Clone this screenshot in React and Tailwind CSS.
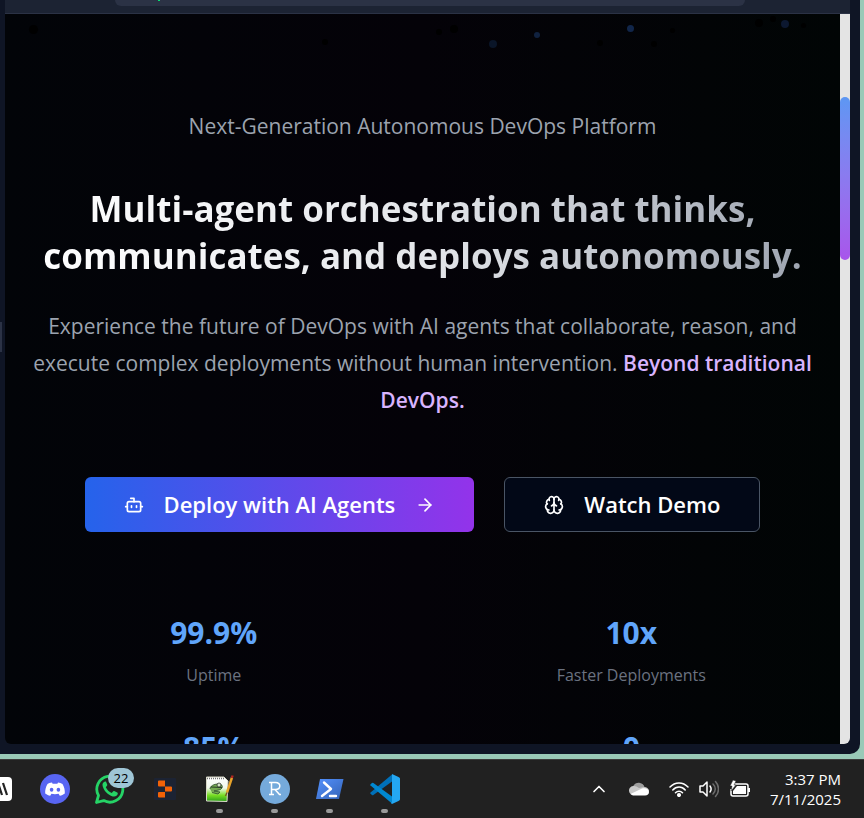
import React from "react";
import { Bot, ArrowRight, Brain, ChevronUp } from "lucide-react";

const particles = [
  ["left-[484px] top-[26px] size-2", "bg-[#0a1528]"],
  ["left-[529px] top-[18px] size-[6px]", "bg-[#10213f]"],
  ["left-[622px] top-[11px] size-[7px]", "bg-[#11264a]"],
  ["left-[776px] top-[6px] size-2", "bg-[#0c1830]"],
  ["left-[24px] top-[11px] size-[9px]", "bg-black"],
  ["left-[317px] top-[25px] size-[6px]", "bg-black"],
  ["left-[431px] top-[15px] size-[6px]", "bg-black"],
  ["left-[445px] top-[11px] size-[8px]", "bg-black"],
  ["left-[592px] top-[26px] size-[6px]", "bg-black"],
  ["left-[646px] top-[27px] size-[6px]", "bg-black"],
  ["left-[665px] top-[14px] size-[5px]", "bg-black"],
  ["left-[750px] top-[5px] size-[8px]", "bg-black"],
  ["left-[765px] top-[2px] size-[6px]", "bg-black"],
  ["left-[796px] top-[9px] size-[5px]", "bg-black"],
];

const stats = [
  { value: "99.9%", label: "Uptime" },
  { value: "10x", label: "Faster Deployments" },
  { value: "85%" },
  { value: "0" },
];

function Hero() {
  return (
    <main className="relative min-w-0 flex-1 overflow-hidden rounded-bl-md bg-linear-to-r from-[#020408] via-[#040208] to-[#010505] px-6 pt-[94px] text-center">
      {particles.map(([place, color]) => (
        <span key={place} className={`absolute rounded-full ${place} ${color}`} />
      ))}
      <p className="text-[21px] leading-9 text-[#9ca3af]">
        Next-Generation Autonomous DevOps Platform
      </p>
      <h1 className="mt-[41px] bg-linear-to-r/srgb from-white via-[#e5e7eb] to-[#9ca3af] bg-clip-text text-[35px] leading-[47px] font-bold whitespace-nowrap text-transparent">
        Multi-agent orchestration that thinks,
        <br />
        communicates, and deploys autonomously.
      </h1>
      <p className="mt-[29px] text-[21px] leading-[37px] whitespace-nowrap text-[#9ca3af]">
        Experience the future of DevOps with AI agents that collaborate, reason, and
        <br />
        execute complex deployments without human intervention.{" "}
        <span className="font-semibold text-[#d8b4fe]">
          Beyond traditional
          <br />
          DevOps.
        </span>
      </p>
      <div className="mt-[58px] flex justify-center gap-[30px] text-[22px] font-semibold whitespace-nowrap text-white">
        <button className="flex h-[55px] items-center rounded-md bg-linear-to-r/srgb from-[#2563eb] to-[#9333ea] px-[39px]">
          <Bot size={20} strokeWidth={2} className="mr-5" />
          Deploy with AI Agents
          <ArrowRight size={20} strokeWidth={2} className="ml-5" />
        </button>
        <button className="flex h-[55px] items-center rounded-md border border-gray-600 bg-[#020817] px-[39px]">
          <Brain size={20} strokeWidth={2} className="mr-5" />
          Watch Demo
        </button>
      </div>
      <div className="mt-[81px] grid grid-cols-2 gap-x-12 gap-y-[39px]">
        {stats.map(({ value, label }) => (
          <div key={value}>
            <div className="text-[30px] leading-10 font-bold text-[#60a5fa]">{value}</div>
            {label && <div className="mt-2 text-[16px] leading-7 text-[#6b7280]">{label}</div>}
          </div>
        ))}
      </div>
    </main>
  );
}

function Claw() {
  return (
    <svg viewBox="0 0 12 30" className="h-[30px] w-3">
      <path d="M-10 3H8a4 4 0 0 1 4 4v16a4 4 0 0 1-4 4h-18z" fill="#fff" />
      <path d="M-2 9l4 12M3 9l4 12" stroke="#222" strokeWidth="2.200" />
    </svg>
  );
}

function Discord() {
  return (
    <svg viewBox="0 0 30 30" className="size-[30px]">
      <circle cx="15" cy="15" r="15" fill="#5865f2" />
      <path d="M12 8.500c-2 .2-3.400.8-4.500 1.500C5.700 13 5 16.200 5.200 19.500c1.700 1.300 3.400 1.900 5 2.200l1.200-2c2.400.6 4.800.6 7.200 0l1.200 2c1.700-.3 3.400-.9 5-2.200.3-3.500-.6-6.700-2.300-9.500-1.400-.8-2.900-1.300-4.500-1.500l-.6 1.300c-1.600-.2-3.200-.2-4.800 0z" fill="#fff" />
      <ellipse cx="11.600" cy="15.700" rx="1.800" ry="2" fill="#5865f2" />
      <ellipse cx="18.400" cy="15.700" rx="1.800" ry="2" fill="#5865f2" />
    </svg>
  );
}

function WhatsApp() {
  return (
    <svg viewBox="0 0 30 30" className="size-[30px]">
      <path d="M1.500 28.500l2-7A13 13 0 1 1 8.700 26.600z" fill="none" stroke="#25d366" strokeWidth="2.800" strokeLinejoin="round" />
      <path d="M10 7.500c-2 .5-3 2.500-2.300 4.800 1.500 5 5 8.600 10 10.100 2.300.7 4.600-.3 5-2.300.2-1 0-1.300-.5-1.600l-3-1.500c-.6-.2-.9 0-1.200.4l-1.200 1.500c-2.800-1.200-4.700-3-6-5.700l1.200-1.500c.3-.4.4-.8.2-1.200l-1.200-2.700c-.2-.4-.6-.5-1-.3z" fill="#25d366" />
    </svg>
  );
}

function Replit() {
  return (
    <svg viewBox="0 0 22 22" className="size-[22px]">
      <rect width="22" height="22" rx="1" fill="#1c2333" />
      <path d="M4 3.500a1 1 0 0 1 1-1h6v6H5a1 1 0 0 1-1-1zM11 8.500h6a1 1 0 0 1 1 1v3a1 1 0 0 1-1 1h-6zM4 15a1 1 0 0 1 1-1h6v5.500H5a1 1 0 0 1-1-1z" fill="#f26207" />
    </svg>
  );
}

function NotepadPlus() {
  return (
    <svg viewBox="0 0 30 30" className="size-[30px]">
      <defs>
        <linearGradient id="paper" x2="0" y2="1">
          <stop offset="0" stopColor="#fff" />
          <stop offset=".45" stopColor="#f1f8ec" />
          <stop offset=".75" stopColor="#77dd22" />
          <stop offset="1" stopColor="#2c9f1d" />
        </linearGradient>
      </defs>
      <path d="M1.500 3H19l4 4-1 20.500-20.500-.5z" fill="url(#paper)" stroke="#d8d8c8" />
      <path d="M2 4.500h17" stroke="#777" strokeWidth="1.500" strokeDasharray="1 1" />
      <path d="M5 15c0-3 4-5 8-5 4 0 5 2 4 4s-4 2-8 3l6 1-2 2-6-1.500" fill="#74a951" stroke="#2e4c2c" strokeWidth=".8" />
      <path d="M6 13l11 .5" stroke="#263c24" />
      <circle cx="14" cy="11" r="2" fill="#d6e8c8" stroke="#222" strokeWidth=".7" />
      <path d="M27 3.500l-5 15" stroke="#e7a32a" strokeWidth="2.400" />
      <path d="M27.600 1.500l-.8 2.500" stroke="#b22722" strokeWidth="2.400" />
      <path d="M22 18.500L20.500 22" stroke="#775022" strokeWidth="1.300" />
    </svg>
  );
}

function RStudio() {
  return (
    <svg viewBox="0 0 30 30" className="size-[30px]">
      <circle cx="15" cy="15" r="15" fill="#75aadb" />
      <path d="M9 8.500h6.500c6 0 5.500 7 0 7h-4M11.500 8.500v12M9 20.500h5M15 15.500l4.500 5H21" fill="none" stroke="#fff" strokeWidth="1.500" />
    </svg>
  );
}

function PowerShell() {
  return (
    <svg viewBox="0 0 30 22" className="h-[22px] w-[30px]">
      <defs>
        <linearGradient id="shell" x2="1" y2="1">
          <stop stopColor="#5391fe" />
          <stop offset="1" stopColor="#3463b5" />
        </linearGradient>
      </defs>
      <path d="M5 1h23.500l-4.500 20H1z" fill="url(#shell)" />
      <path d="M9 4.500l7 6.500L7 18M15 18h6" fill="none" stroke="#fff" strokeWidth="2.400" strokeLinecap="round" strokeLinejoin="round" />
    </svg>
  );
}

function VsCode() {
  return (
    <svg viewBox="0 0 30 30" className="size-[30px]">
      <path d="M.5 18.500Q0 19 .5 19.700L2 21q.7.500 1.400 0L22 7.500V.500z" fill="#0070b8" />
      <path d="M.5 11.500Q0 11 .5 10.300L2 9q.7-.5 1.400 0L22 22.500v7z" fill="#0088d1" />
      <path d="M22 0l6.500 3c1 .5 1.500 1 1.500 2v20c0 1-.5 1.500-1.500 2L22 30l-1-1 1-1z" fill="#24a7f2" />
    </svg>
  );
}

const apps = [
  ["Discord", Discord, false],
  ["WhatsApp", WhatsApp, false],
  ["Replit", Replit, false],
  ["Notepad++", NotepadPlus, true],
  ["RStudio", RStudio, true],
  ["PowerShell", PowerShell, true],
  ["Visual Studio Code", VsCode, true],
];

function Taskbar() {
  return (
    <footer className="flex h-[59px] items-center border-t border-[#3b3b3b] bg-[#212121] pr-[23px] text-white">
      <button aria-label="Warp" className="mr-[15px]">
        <Claw />
      </button>
      <nav className="flex">
        {apps.map(([name, Icon, running]) => (
          <button key={name} aria-label={name} className="relative flex h-[58px] w-[55px] items-center justify-center">
            <Icon />
            {name === "WhatsApp" && (
              <span className="absolute top-2 right-[3px] flex h-5 w-[26px] items-center justify-center rounded-full bg-[#9fc6d6] text-[13px] leading-5 text-black">
                22
              </span>
            )}
            {running && <span className="absolute bottom-[5px] h-1 w-[7px] rounded-full bg-[#9a9a9a]" />}
          </button>
        ))}
      </nav>
      <div className="ml-auto flex items-center">
        <button aria-label="Show hidden icons" className="mr-5">
          <ChevronUp size={20} strokeWidth={2} />
        </button>
        <svg viewBox="0 0 20 14" className="mr-5 h-[14px] w-5">
          <path d="M4 8C3 3 7 0 11 1c2 .3 4 2 4.500 4L10 9z" fill="#9d9d9d" />
          <path d="M5 13a4.500 4.500 0 0 1-1-9c2-.3 4 .4 6 2l5-1c3 0 5 2 5 4l-8 4z" fill="#c8c8c8" />
          <path d="M1.500 12L13 6.500c3-1 7 .5 7 3.500 0 2-1.500 3.500-4 3.500H5c-1.500 0-2.700-.6-3.500-1.500z" fill="#fff" />
        </svg>
        <svg viewBox="0 0 20 16" className="mr-[10px] h-4 w-5" fill="none" stroke="#fff" strokeWidth="1.500" strokeLinecap="round">
          <path d="M1 6c5-5.500 13-5.500 18 0M3.800 9c3.500-4 9-4 12.400 0M6.500 11.800c2-2.200 5-2.200 7 0" />
          <circle cx="10" cy="14" r="1.300" fill="#fff" />
        </svg>
        <svg viewBox="0 0 20 18" className="mr-[10px] h-[18px] w-5" fill="none" stroke="#fff" strokeWidth="1.500" strokeLinecap="round" strokeLinejoin="round">
          <path d="M1 6h3l4-4v14l-4-4H1zM11 6c1.500 2 1.500 4 0 6" />
          <path d="M14 4c3 3 3 7 0 10M16.500 1.500c4 4.500 4 10.500 0 15" stroke="#6c6c6c" />
        </svg>
        <svg viewBox="0 0 22 18" className="mr-[19px] h-[18px] w-[22px]">
          <path d="M5 4h12a2 2 0 0 1 2 2v8a2 2 0 0 1-2 2H4a2 2 0 0 1-2-2V9" fill="none" stroke="#fff" strokeWidth="1.500" />
          <path d="M8 6h9v8H4v-3z" fill="#fff" />
          <path d="M19 8h2v4h-2z" fill="#fff" />
          <path d="M4 0L1 6h2L2 11l5-6H5l2-4z" fill="#fff" stroke="#212121" strokeWidth=".5" />
        </svg>
        <time className="text-right text-[15px] leading-5">
          3:37 PM
          <br />
          7/11/2025
        </time>
      </div>
    </footer>
  );
}

export default function App() {
  return (
    <div className="flex h-screen flex-col overflow-hidden bg-[#99c9b7] font-['Open_Sans','Noto_Sans',sans-serif]">
      <div className="mr-1 mb-[5px] flex min-h-0 flex-1 flex-col rounded-br-[10px] bg-[#0f1525] pr-[10px] pb-[10px]">
        <header className="ml-[5px] h-[14px] shrink-0 border-b border-[#2b3245] bg-[#1c2333] pr-[105px] pl-[110px]">
          <div className="h-[6px] rounded-b-md bg-[#2b3245]">
            <div className="ml-[43px] h-px w-[2px] bg-green-400" />
          </div>
        </header>
        <div className="flex min-h-0 flex-1">
          <div className="flex w-[5px] items-center">
            <span className="mb-[84px] h-[30px] w-[2px] bg-[#2b3245]" />
          </div>
          <Hero />
          <div className="w-[10px] overflow-hidden rounded-br-md bg-[#e4e4e4] pt-[83px]">
            <div className="h-[163px] rounded-full bg-linear-to-b from-[#5c97f3] to-[#a855eb]" />
          </div>
        </div>
      </div>
      <Taskbar />
    </div>
  );
}
